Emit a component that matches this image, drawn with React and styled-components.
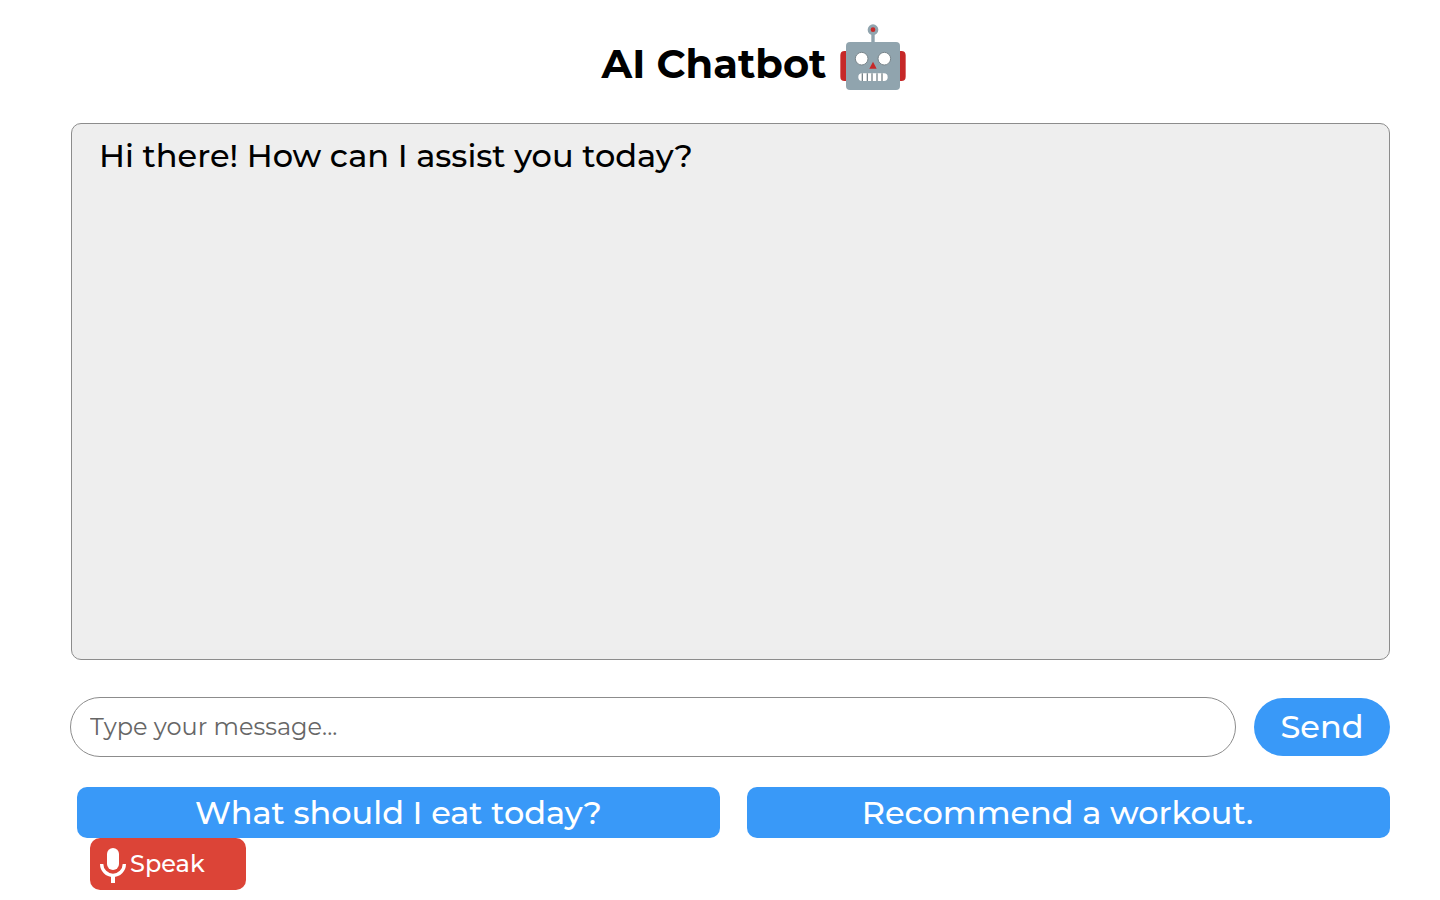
import React, { useState } from 'react';
import styled, { createGlobalStyle } from 'styled-components';

const GlobalStyle = createGlobalStyle`
  *, *::before, *::after { box-sizing: border-box; }
  body { margin: 0; background: #fff; color: #000; }
  body, button, input { font-family: Montserrat, Inter, sans-serif; }
`;

const Page = styled.main`
  display: flex;
  flex-direction: column;
  min-height: 100vh;
  padding: 0 50px 10px 70px;
`;

const Header = styled.header`
  display: flex;
  justify-content: center;
  align-items: center;
  gap: 14px;
  height: 123px;
  padding: 0 0 9px 48px;
`;

const Title = styled.h1`
  margin: 0;
  padding-top: 14px;
  font-size: 40px;
  line-height: 48px;
  font-weight: 700;
  white-space: nowrap;
`;

const ChatBox = styled.section`
  flex: 1;
  min-height: 200px;
  margin-left: 1px;
  padding: 12px 27px;
  border: 1px solid #8c8c8c;
  border-radius: 10px;
  background: #eee;
`;

const Message = styled.p`
  margin: 0;
  font-size: 32px;
  line-height: 40px;
  font-weight: 500;
`;

const MessageForm = styled.form`
  display: flex;
  align-items: center;
  gap: 18px;
  margin-top: 37px;
`;

const MessageInput = styled.input`
  flex: 1;
  min-width: 0;
  height: 60px;
  padding: 0 19px 2px;
  border: 1px solid #8c8c8c;
  border-radius: 30px;
  background: #fff;
  font-size: 24px;
  &::placeholder { color: #666; opacity: 1; }
`;

const Button = styled.button`
  border: 0;
  padding: 0;
  background: #3999f8;
  color: #fff;
  font-size: 32px;
  line-height: 40px;
  font-weight: 500;
  white-space: nowrap;
  cursor: pointer;
`;

const SendButton = styled(Button)`
  width: 136px;
  height: 58px;
  border-radius: 29px;
`;

const Suggestions = styled.div`
  display: grid;
  grid-template-columns: 1fr 1fr;
  gap: 27px;
  margin: 30px 0 0 7px;
`;

const SuggestionButton = styled(Button)`
  height: 51px;
  padding-right: ${({ $inset }) => ($inset ? '22px' : '0')};
  border-radius: 10px;
`;

const SpeakButton = styled(Button)`
  display: flex;
  align-items: center;
  gap: 4px;
  width: 156px;
  height: 52px;
  margin-left: 20px;
  padding: 0 10px;
  border-radius: 10px;
  background: #dc4437;
  font-size: 24px;
`;

const Robot = () => (
  <svg width="66" height="66" viewBox="30 27 198 198" role="img" aria-label="Robot">
    <path d="M125 52h8v31h-8z" fill="#90a4ae" stroke="#90a4ae" strokeWidth="2" />
    <circle cx="129" cy="44" r="16" fill="#90a4ae" />
    <circle cx="129" cy="44" r="7" fill="#c62828" />
    <path d="M50 108H44q-13 0-13 13v64q0 13 13 13h6zM208 108h6q13 0 13 13v64q0 13-13 13h-6z" fill="#c62828" />
    <rect x="48" y="81" width="162" height="144" rx="12" fill="#90a4ae" />
    <g fill="#fff" stroke="#78858b" strokeWidth="3">
      <circle cx="95" cy="131" r="19" />
      <circle cx="163" cy="131" r="19" />
    </g>
    <path d="M129 140l11 21h-22z" fill="#c62828" />
    <rect x="85" y="175" width="88" height="23" rx="11" fill="#fff" />
    <path d="M97 175v23M112 175v23M126 175v23M141 175v23M156 175v23" fill="none" stroke="#78858b" strokeWidth="4" />
  </svg>
);

const Mic = () => (
  <svg width="26" height="38" viewBox="120 195 78 114" aria-hidden="true">
    <rect x="141" y="204" width="36" height="66" rx="18" fill="#fff" />
    <path d="M125 252a34 34 0 0 0 68 0" fill="none" stroke="#fff" strokeWidth="10" />
    <path d="M153 288h12v21h-12z" fill="#fff" />
  </svg>
);

export default function App() {
  const [draft, setDraft] = useState('');

  return (
    <>
      <GlobalStyle />
      <Page>
        <Header>
          <Title>AI Chatbot</Title>
          <Robot />
        </Header>
        <ChatBox aria-label="Conversation">
          <Message>Hi there! How can I assist you today?</Message>
        </ChatBox>
        <MessageForm onSubmit={(event) => event.preventDefault()}>
          <MessageInput
            type="text"
            aria-label="Message"
            placeholder="Type your message..."
            value={draft}
            onChange={(event) => setDraft(event.target.value)}
          />
          <SendButton type="submit">Send</SendButton>
        </MessageForm>
        <Suggestions>
          <SuggestionButton type="button">What should I eat today?</SuggestionButton>
          <SuggestionButton type="button" $inset>Recommend a workout.</SuggestionButton>
        </Suggestions>
        <SpeakButton type="button">
          <Mic />
          Speak
        </SpeakButton>
      </Page>
    </>
  );
}
